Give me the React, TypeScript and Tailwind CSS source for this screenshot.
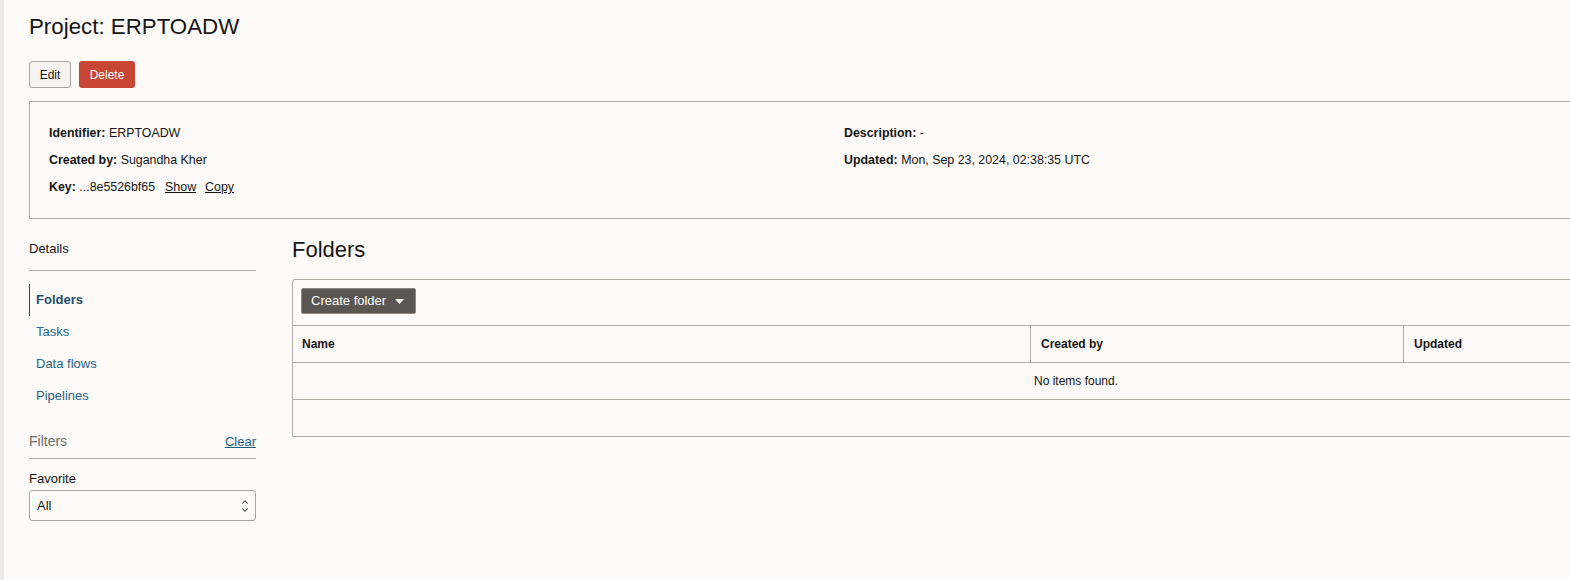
import { ChevronDown, ChevronUp } from 'lucide-react'

const nav = ['Folders', 'Tasks', 'Data flows', 'Pipelines']

function Field({ label, children }: { label: string; children: React.ReactNode }) {
  return (
    <div>
      <span className="font-bold">{label}:</span> {children}
    </div>
  )
}

export default function App() {
  const active = 'Folders'

  return (
    <div
      className="flex w-full min-h-[580px] overflow-hidden bg-[#fcfbfa] text-[#161513]"
      style={{ fontFamily: '"Liberation Sans", Arial, sans-serif' }}
    >
      <div className="w-[4px] shrink-0 bg-[#ebeae8]" />
      <div className="pl-[25px] shrink-0">
        <h1 className="mt-[13px] text-[22.3px] leading-[28px]">Project: ERPTOADW</h1>

        <div className="mt-[20px] flex gap-[8px] text-[12px]">
          <button className="h-[27px] w-[42px] rounded-[3px] border border-[#a9a6a2] bg-[#f5f4f2]">Edit</button>
          <button className="h-[27px] w-[56px] rounded-[3px] bg-[#c74634] text-white">Delete</button>
        </div>

        <div className="mt-[13px] h-[118px] w-[1640px] border border-[#aeaba7] pl-[19px] pt-[18px] text-[12.4px] leading-[27px]">
          <div className="grid grid-cols-[795px_1fr]">
            <div>
              <Field label="Identifier">ERPTOADW</Field>
              <Field label="Created by">Sugandha Kher</Field>
              <div>
                <span className="font-bold">Key:</span> ...8e5526bf65
                <span className="ml-[10px] underline">Show</span>
                <span className="ml-[9px] underline">Copy</span>
              </div>
            </div>
            <div>
              <Field label="Description">-</Field>
              <Field label="Updated">Mon, Sep 23, 2024, 02:38:35 UTC</Field>
            </div>
          </div>
        </div>

        <div className="flex gap-[36px]">
          <aside className="w-[227px] shrink-0">
            <div className="mt-[21px] border-b border-[#b0aca6] pb-[12px] text-[13px] leading-[18px]">Details</div>
            <ul className="mt-[13px] text-[13px]">
              {nav.map(item => (
                <li
                  key={item}
                  className={`flex h-[32px] items-center ${
                    item === active
                      ? 'border-l-[1.5px] border-[#1f4e6d] pl-[6px] font-bold text-[#1f4e6d]'
                      : 'pl-[7px] text-[#2a6488]'
                  }`}
                >
                  {item}
                </li>
              ))}
            </ul>
            <div className="mt-[19px] flex items-end justify-between border-b border-[#b0aca6] pb-[7px]">
              <span className="text-[14px] leading-[20px] text-[#6f6c69]">Filters</span>
              <span className="text-[13px] leading-[18px] text-[#1f5c7f] underline">Clear</span>
            </div>
            <div className="mt-[11px] text-[13px] leading-[18px]">Favorite</div>
            <div className="mt-[2px] flex h-[31px] items-center justify-between rounded-[3px] border border-[#a9a6a2] bg-[#fcfbfa] pl-[7px] pr-[5px] text-[13px]">
              <span>All</span>
              <span className="flex flex-col items-center text-[#3a3836]">
                <ChevronUp size={10} strokeWidth={2.5} className="-mb-[2px]" />
                <ChevronDown size={10} strokeWidth={2.5} />
              </span>
            </div>
          </aside>

          <main className="w-[1568px] shrink-0">
            <h2 className="mt-[17px] text-[22px] leading-[28px]">Folders</h2>
            <div className="mt-[15px] rounded-tl-[3px] border border-[#b0aca6] text-[12px]">
              <div className="h-[45px] px-[8px] pt-[8px]">
                <button className="flex h-[26px] w-[115px] items-center gap-[9px] rounded-[2px] border border-[#8c8884] bg-[#5b5652] pl-[9px] text-[13px] text-white">
                  Create folder
                  <svg width="9" height="5" viewBox="0 0 9 5" className="mt-[1px]">
                    <path d="M0 0h9L4.5 5z" fill="white" />
                  </svg>
                </button>
              </div>
              <div className="grid h-[37px] grid-cols-[738px_373px_1fr] border-t border-[#b0aca6] font-bold">
                <div className="flex items-center border-r border-[#b0aca6] pl-[9px]">Name</div>
                <div className="flex items-center border-r border-[#b0aca6] pl-[10px]">Created by</div>
                <div className="flex items-center pl-[10px]">Updated</div>
              </div>
              <div className="flex h-[37px] items-center justify-center border-t border-[#b0aca6]">No items found.</div>
              <div className="h-[37px] border-t border-[#b0aca6]" />
            </div>
          </main>
        </div>
      </div>
    </div>
  )
}
